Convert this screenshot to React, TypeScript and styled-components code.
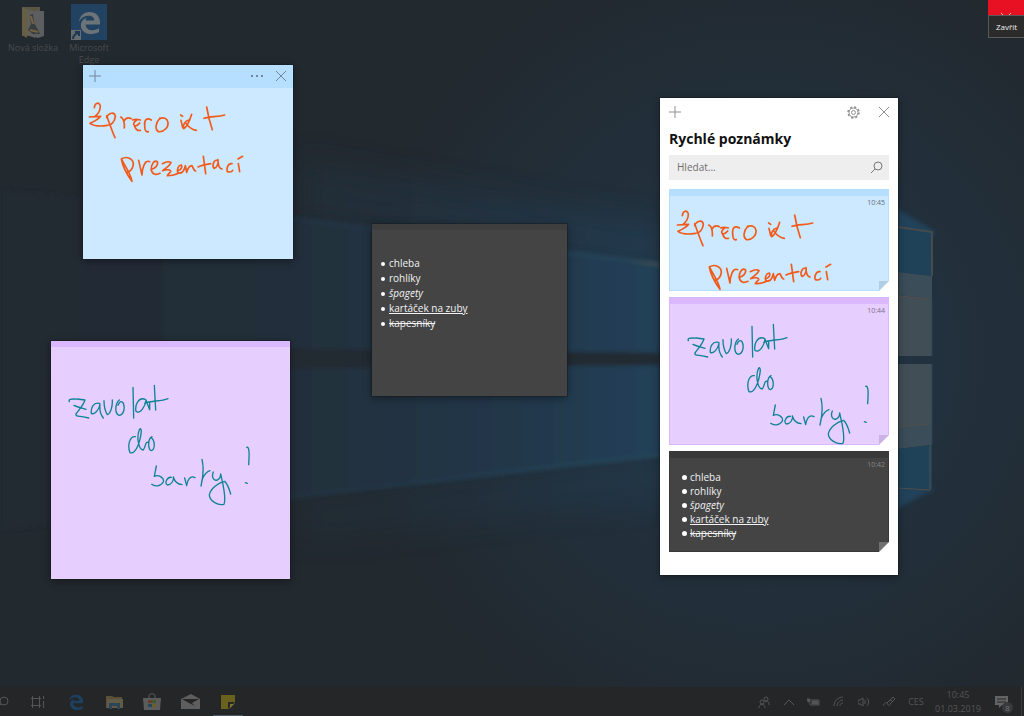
import React from 'react';
import styled, { createGlobalStyle } from 'styled-components';

const GlobalStyle = createGlobalStyle`
  * {
    box-sizing: border-box;
  }

  body {
    margin: 0;
    background: #222930;
    font-family: 'Open Sans', 'Noto Sans', sans-serif;
  }

  button {
    border: 0;
    padding: 0;
    background: none;
    color: inherit;
    font: inherit;
    cursor: pointer;
  }

  svg {
    display: block;
  }
`;

const Wallpaper = () => (
  <WallpaperSvg viewBox="0 0 1024 716" preserveAspectRatio="none" aria-hidden="true">
    <defs>
      <radialGradient id="glow" gradientUnits="userSpaceOnUse" cx="760" cy="355" r="410">
        <stop offset="0" stopColor="#20374a" />
        <stop offset="0.5" stopColor="#22303c" />
        <stop offset="1" stopColor="#22292f" />
      </radialGradient>
      <linearGradient id="beam" gradientUnits="userSpaceOnUse" x1="0" y1="0" x2="660" y2="0">
        <stop offset="0" stopColor="#222a31" />
        <stop offset="0.45" stopColor="#212f3b" />
        <stop offset="0.8" stopColor="#21384b" />
        <stop offset="1" stopColor="#204058" />
      </linearGradient>
      <linearGradient id="edge" gradientUnits="userSpaceOnUse" x1="250" y1="0" x2="660" y2="0">
        <stop offset="0" stopColor="#21405a" stopOpacity="0.2" />
        <stop offset="1" stopColor="#26495c" />
      </linearGradient>
      <filter id="soft" x="-10%" y="-10%" width="120%" height="120%">
        <feGaussianBlur stdDeviation="2" />
      </filter>
      <filter id="haze" x="-30%" y="-30%" width="160%" height="160%">
        <feGaussianBlur stdDeviation="14" />
      </filter>
    </defs>
    <rect width="1024" height="716" fill="#222930" />
    <rect width="1024" height="716" fill="url(#glow)" />
    <path d="M300 160L660 225V270L300 222Z" fill="url(#beam)" opacity="0.6" filter="url(#haze)" />
    <path d="M300 500L660 455V500L300 540Z" fill="url(#beam)" opacity="0.4" filter="url(#haze)" />
    <g filter="url(#soft)">
      <path d="M0 190L290 217L660 264V353L0 346Z" fill="url(#beam)" />
      <path d="M0 370L660 365V455L293 498L0 530Z" fill="url(#beam)" />
      <path d="M0 346L660 353V365L0 370Z" fill="#222931" />
      <path d="M250 213L660 264M250 502L660 455" stroke="url(#edge)" strokeWidth="3" fill="none" />
    </g>
    <path d="M624 260L660 263V267Z" fill="#414b4e" filter="url(#soft)" />
    <path d="M890 205L936 232L928 240L890 232ZM890 485L936 488L890 512Z" fill="#215070" opacity="0.6" filter="url(#soft)" />
    <path d="M898 227L932 232V276L898 272Z" fill="#1f4259" />
    <path d="M898 272L932 276V299L898 295Z" fill="#3a4d58" />
    <path d="M898 295L932 299V356H898Z" fill="#424e55" />
    <path d="M898 364H932V424L898 427Z" fill="#424e55" />
    <path d="M898 427L932 424V445L898 449Z" fill="#3a4d58" />
    <path d="M898 449L932 445V489L898 487Z" fill="#1f4259" />
    <path d="M898 227L932 232V276" stroke="#464b4d" strokeWidth="2" fill="none" />
    <path d="M898 296L930 299M898 427L930 424M930 445V490L898 488" stroke="#51504d" strokeWidth="1" fill="none" />
    <path d="M932 300V356M932 364V445" stroke="#28475a" strokeWidth="1" />
  </WallpaperSvg>
);

const OrangeInk = () => (
  <svg width="174" height="88" viewBox="18 0 522 264" role="img" aria-label="Zpracovat prezentací">
    <InkStroke
      $color="#f15a1a"
      $width={5}
      d="M43 38C45 22 59 20 61 34C61 48 54 58 44 65M28 66L62 64C54 74 42 80 30 85C44 95 64 94 82 91
      M80 62C88 84 96 108 105 128M80 68C86 52 104 50 106 64C104 80 94 90 86 90
      M122 66C131 70 134 82 133 99M131 80C136 70 144 66 154 71
      M158 75C166 71 172 73 181 75M170 75C160 82 158 90 166 93C172 92 176 88 179 84M164 94C168 104 174 108 181 106
      M214 75C200 66 192 76 194 92C194 106 198 112 205 110
      M240 69C226 84 224 104 236 110C252 112 266 96 264 82C262 70 250 65 238 72
      M303 76L308 98M302 60L308 64
      M335 58C330 74 322 96 311 101C308 90 314 78 327 75M316 82C326 98 336 104 349 106
      M380 36C384 60 390 84 397 104M372 70C390 64 412 66 434 60
      M124 192C128 214 142 240 156 259C154 240 136 214 124 192C140 182 160 190 160 208C158 222 148 230 142 232
      M176 196L186 240C186 222 194 192 209 200
      M213 223C224 222 236 210 232 200C222 194 212 210 214 226C218 240 230 240 240 235
      M247 206C258 200 268 199 273 203C268 213 256 221 248 227C260 223 273 223 272 230C268 235 262 239 262 242C276 242 286 240 296 234
      M292 228C302 226 308 216 304 210C296 210 289 222 294 234C304 236 312 232 316 212L320 232C324 218 330 212 336 212C340 218 340 226 347 228
      M370 184L377 236M354 216C366 210 378 208 392 206
      M412 196C400 194 396 214 402 220C412 218 416 204 414 194C414 208 418 220 426 222
      M456 206C444 204 438 222 442 230C450 232 456 230 458 226
      M475 206L479 230M474 192L488 184"
    />
  </svg>
);

const TealInk = () => (
  <svg width="184" height="122" viewBox="54 132 552 366" role="img" aria-label="zavolat do banky!">
    <InkStroke
      $color="#0e8296"
      $width={4}
      d="M58 185C54 174 70 178 82 177L105 180C100 196 88 208 78 222C76 232 92 226 116 234M72 196C84 202 96 204 108 208
      M148 190C130 186 122 204 124 220C134 226 148 208 150 192C148 208 152 224 160 234
      M162 182C162 200 166 214 172 224C182 220 188 200 187 180
      M208 180C194 192 194 222 208 226C222 224 226 202 219 188C212 180 206 190 204 196
      M249 142L251 234
      M286 178C266 170 254 194 258 214C270 224 286 200 288 180L299 209V186
      M313 136L317 210M284 190C306 180 330 186 354 176
      M256 290C238 288 232 318 240 338C256 344 270 310 274 274C272 254 262 276 264 300C266 316 272 330 280 330C288 318 286 302 296 308
      M306 290C292 298 294 328 304 332C316 328 316 300 302 292
      M319 378L313 409C326 403 344 414 340 426C332 440 314 440 305 433
      M364 412C352 410 342 430 352 435C366 434 372 420 370 411C374 424 384 433 396 434
      M404 414L410 437C412 422 420 404 435 413
      M456 358C462 384 460 410 453 438M456 420C462 404 470 395 480 392
      M490 396C484 410 490 424 502 420C510 416 512 408 512 402C518 430 530 472 522 493C504 498 478 482 478 464C482 446 504 428 524 424C532 432 538 448 542 462
      M590 322C599 318 598 346 596 374M586 428L592 430"
    />
  </svg>
);

const PlusIcon = () => (
  <svg width="12" height="12" viewBox="0 0 12 12" stroke="currentColor" fill="none">
    <path d="M6 0V12M0 6H12" />
  </svg>
);

const CloseIcon = () => (
  <svg width="10" height="10" viewBox="0 0 10 10" stroke="currentColor" fill="none">
    <path d="M0 0L10 10M10 0L0 10" />
  </svg>
);

const GearIcon = () => (
  <svg width="13" height="13" viewBox="0 0 26 26" stroke="currentColor" fill="none">
    <circle cx="13" cy="13" r="9" strokeWidth="2" />
    <circle cx="13" cy="13" r="11" strokeWidth="3" strokeDasharray="4.32 4.32" />
    <circle cx="13" cy="13" r="4" strokeWidth="2" />
  </svg>
);

const ShoppingList = ({ roomy }: { roomy?: boolean }) => (
  <Items $roomy={roomy}>
    <li>chleba</li>
    <li>rohlíky</li>
    <li><em>špagety</em></li>
    <li><u>kartáček na zuby</u></li>
    <li><s>kapesníky</s></li>
  </Items>
);

const EdgeLogo = ({ size }: { size: number }) => (
  <svg width={size} height={size} viewBox="0 0 24 24" fill="currentColor" aria-hidden="true">
    <path d="M1 11C2 5 6 1 12 1C19 1 23 6 23 12V14H8C8 18 11 20 15 20C18 20 20 19 22 18V22C20 23 17 24 14 24C7 24 3 20 3 15C3 11 6 8 9 7C8 8 8 9 8 10H17C17 7 15 5 11 5C7 5 3 7 1 11Z" />
  </svg>
);

const DesktopIcons = () => (
  <Shortcuts>
    <Shortcut href="#slozka">
      <svg width="36" height="36" viewBox="0 0 36 36" aria-hidden="true">
        <path d="M7 3H25V32H7Z" fill="#5a5645" />
        <path d="M12 5L20 8V34L12 31Z" fill="#625f59" />
        <path d="M20 7H29V32L23 34L16 32V10Z" fill="#5c5e5f" />
        <path d="M15 11L18 10L19 19L22 24L25 30L18 30L13 26L16 20Z" fill="#363c3f" />
        <path d="M16 12L18 20M15 26L23 28" stroke="#75633f" strokeWidth="2" />
        <path d="M7 3L12 6V34L7 31Z" fill="#665f46" />
      </svg>
      Nová složka
    </Shortcut>
    <Shortcut href="#edge">
      <Tile>
        <EdgeLogo size={23} />
        <ShortcutArrow viewBox="0 0 10 10" aria-hidden="true">
          <path d="M0 0H10V10H0Z" fill="#666c70" />
          <path d="M2 9C2 6 4 4 7 3M4 2H8V6" stroke="#1d3a54" strokeWidth="2" fill="none" />
        </ShortcutArrow>
      </Tile>
      Microsoft Edge
    </Shortcut>
  </Shortcuts>
);

const NotesList = () => (
  <ListWindow>
    <ListBar>
      <button type="button" aria-label="Nová poznámka"><PlusIcon /></button>
      <BarGroup>
        <button type="button" aria-label="Nastavení"><GearIcon /></button>
        <button type="button" aria-label="Zavřít seznam"><CloseIcon /></button>
      </BarGroup>
    </ListBar>
    <Title>Rychlé poznámky</Title>
    <SearchBox>
      <input type="search" placeholder="Hledat..." aria-label="Hledat" />
      <button type="button" aria-label="Vyhledat">
        <svg width="12" height="12" viewBox="0 0 12 12" stroke="currentColor" fill="none">
          <circle cx="7" cy="5" r="4" />
          <path d="M4 8L0 12" />
        </svg>
      </button>
    </SearchBox>
    <Cards>
      <Card $kind="blue">
        <time>10:45</time>
        <CardBody $kind="blue"><OrangeInk /></CardBody>
      </Card>
      <Card $kind="purple">
        <time>10:44</time>
        <CardBody $kind="purple"><TealInk /></CardBody>
      </Card>
      <Card $kind="dark">
        <time>10:42</time>
        <CardBody $kind="dark"><ShoppingList /></CardBody>
      </Card>
    </Cards>
  </ListWindow>
);

const Taskbar = () => (
  <Bar>
    <SearchButton type="button" aria-label="Hledání">
      <svg width="10" height="12" viewBox="3 0 10 12" stroke="currentColor" fill="none">
        <circle cx="7" cy="5" r="4" />
        <path d="M4 8L1 11" />
      </svg>
    </SearchButton>
    <TaskButton type="button" aria-label="Zobrazení úkolů">
      <svg width="14" height="12" viewBox="0 0 14 12" stroke="currentColor" fill="none">
        <path d="M1.5 0V12M8.5 0V12M0 2.5H10M0 9.5H10M12.5 0V3M12.5 5V12" />
      </svg>
    </TaskButton>
    <TaskButton type="button" aria-label="Microsoft Edge" $color="#1d4060">
      <EdgeLogo size={16} />
    </TaskButton>
    <TaskButton type="button" aria-label="Průzkumník souborů">
      <svg width="17" height="14" viewBox="0 0 17 14">
        <path d="M0 1H6L8 2H16V13H0Z" fill="#5a5039" />
        <path d="M1 4H17V13H1Z" fill="#625b48" />
        <path d="M3 14V8H14V14H11V11H6V14Z" fill="#2b4656" />
      </svg>
    </TaskButton>
    <TaskButton type="button" aria-label="Microsoft Store">
      <svg width="18" height="17" viewBox="0 0 18 17">
        <path d="M6 5V3C6 0 12 0 12 3V5" fill="none" stroke="#5c5c5c" strokeWidth="1" />
        <path d="M0 5H18L17 17H1Z" fill="#5c5c5c" />
        <path d="M5 7H9V10H5Z" fill="#6b3a29" />
        <path d="M9 7H13V10H9Z" fill="#40582c" />
        <path d="M5 11H9V14H5Z" fill="#23495f" />
        <path d="M9 11H13V14H9Z" fill="#6f5e26" />
      </svg>
    </TaskButton>
    <TaskButton type="button" aria-label="Pošta">
      <svg width="19" height="15" viewBox="0 0 19 15">
        <path d="M0 5L10 0L19 5V15H0Z" fill="#5e5e5e" />
        <path d="M1 5L18 5L11 9L14 12L8 9Z" fill="#262626" />
      </svg>
    </TaskButton>
    <TaskButton type="button" aria-label="Rychlé poznámky" $active>
      <svg width="14" height="14" viewBox="0 0 14 14">
        <path d="M0 0H14V8L8 14H0Z" fill="#68621d" />
        <path d="M7 14V7H14Z" fill="#262626" />
        <path d="M9 13V9H13Z" fill="#78743a" />
      </svg>
    </TaskButton>
    <Tray>
      <TrayButton type="button" aria-label="Lidé">
        <svg width="12" height="12" viewBox="0 0 12 12" stroke="currentColor" fill="none">
          <circle cx="8" cy="3" r="2" />
          <circle cx="4" cy="6" r="2" />
          <path d="M1 12C1 7 7 7 7 12M7 6C10 4 11 6 11 9" />
        </svg>
      </TrayButton>
      <TrayButton type="button" aria-label="Skryté ikony">
        <svg width="10" height="6" viewBox="0 0 10 6" stroke="currentColor" fill="none">
          <path d="M0 6L5 1L10 6" />
        </svg>
      </TrayButton>
      <TrayButton type="button" aria-label="Baterie">
        <svg width="13" height="8" viewBox="0 0 13 8" stroke="currentColor" fill="none">
          <path d="M4 2H12V7H3V5" />
          <path d="M5 3H11V6H5ZM0 1H3V4H1Z" fill="currentColor" />
        </svg>
      </TrayButton>
      <TrayButton type="button" aria-label="Síť">
        <svg width="11" height="11" viewBox="0 0 11 11" stroke="currentColor" fill="none">
          <path d="M1 10C1 5 5 1 10 1M4 10C4 7 7 4 10 4M7 10C7 8 8 7 10 7" />
        </svg>
      </TrayButton>
      <TrayButton type="button" aria-label="Hlasitost">
        <svg width="11" height="10" viewBox="0 0 11 10" stroke="currentColor" fill="none">
          <path d="M0 3H2L5 1V9L2 7H0ZM7 3V7M9 1C11 3 11 7 9 9" />
        </svg>
      </TrayButton>
      <TrayButton type="button" aria-label="Pero">
        <svg width="12" height="11" viewBox="0 0 12 11" stroke="currentColor" fill="none">
          <path d="M0 10C2 6 3 6 4 7C5 9 6 11 7 8M4 7L10 1L12 3L7 8M7 4L9 5" />
        </svg>
      </TrayButton>
      <TrayButton type="button" $wide>CES</TrayButton>
      <Clock type="button">
        <span>10:45</span>
        <span>01.03.2019</span>
      </Clock>
      <ActionCenter type="button" aria-label="Centrum akcí">
        <svg width="13" height="12" viewBox="0 0 13 12">
          <path d="M0 0H13V9H7L4 12V9H0Z" fill="#646464" />
          <path d="M2 3H11M2 6H11" stroke="#262626" />
        </svg>
        <Badge>8</Badge>
      </ActionCenter>
    </Tray>
  </Bar>
);

export default function App() {
  return (
    <>
      <GlobalStyle />
      <Screen>
        <Desktop>
          <Wallpaper />
          <DesktopIcons />
          <BlueNote>
            <NoteBar>
              <button type="button" aria-label="Přidat poznámku"><PlusIcon /></button>
              <BarGroup>
                <button type="button" aria-label="Nabídka">
                  <svg width="12" height="2" viewBox="0 0 12 2" fill="currentColor">
                    <path d="M0 0H2V2H0ZM5 0H7V2H5ZM10 0H12V2H10Z" />
                  </svg>
                </button>
                <button type="button" aria-label="Zavřít poznámku"><CloseIcon /></button>
              </BarGroup>
            </NoteBar>
            <OrangeInk />
          </BlueNote>
          <PurpleNote>
            <TealInk />
          </PurpleNote>
          <DarkNote>
            <ShoppingList roomy />
          </DarkNote>
          <NotesList />
          <Corner>
            <CornerClose type="button" aria-label="Zavřít">
              <svg width="10" height="10" viewBox="0 0 10 10" stroke="#f6c9a0" fill="none">
                <path d="M0 0L10 10M10 0L0 10" />
              </svg>
            </CornerClose>
            <Tooltip role="tooltip">Zavřít</Tooltip>
          </Corner>
        </Desktop>
        <Taskbar />
      </Screen>
    </>
  );
}

const kinds = {
  blue: { stripe: '#b5deff', body: '#cde9ff', fold: '#afcde3', time: '#5f6f7c', pad: '8px 5px 0' },
  purple: { stripe: '#d9b8ff', body: '#e6cfff', fold: '#cab2e4', time: '#7c6f8a', pad: '20px 18px 0' },
  dark: { stripe: '#393939', body: '#444444', fold: '#707070', time: '#858585', pad: '13px 13px 12px' },
};

type Kind = keyof typeof kinds;

const Screen = styled.div`
  display: flex;
  flex-direction: column;
  min-height: 100vh;
`;

const Desktop = styled.main`
  position: relative;
  flex: 1;
  overflow: hidden;
`;

const WallpaperSvg = styled.svg`
  position: absolute;
  top: 0;
  left: 0;
  width: 100%;
  height: 100vh;
`;

const InkStroke = styled.path<{ $color: string; $width: number }>`
  fill: none;
  stroke: ${props => props.$color};
  stroke-width: ${props => props.$width};
  stroke-linecap: round;
  stroke-linejoin: round;
`;

const Shortcuts = styled.nav`
  position: relative;
  display: flex;
  gap: 2px;
  padding: 4px 6px;
`;

const Shortcut = styled.a`
  display: flex;
  flex-direction: column;
  align-items: center;
  gap: 2px;
  width: 54px;
  color: #484b4e;
  font-size: 9px;
  line-height: 12px;
  text-align: center;
  text-decoration: none;
`;

const Tile = styled.span`
  position: relative;
  display: flex;
  align-items: center;
  justify-content: center;
  width: 36px;
  height: 36px;
  background: #214260;
  color: #6c7478;
`;

const ShortcutArrow = styled.svg`
  position: absolute;
  left: 0;
  bottom: 0;
  width: 10px;
  height: 10px;
`;

const Note = styled.section`
  position: absolute;
  box-shadow: 0 0 0 1px rgba(20, 24, 30, 0.4), 0 2px 8px rgba(0, 0, 0, 0.4);
`;

const BlueNote = styled(Note)`
  left: 83px;
  top: 65px;
  width: 210px;
  height: 194px;
  background: ${kinds.blue.body};

  > svg {
    margin: 7px 3px;
  }
`;

const PurpleNote = styled(Note)`
  left: 51px;
  top: 341px;
  width: 239px;
  height: 238px;
  padding: 37px 17px;
  border-top: 6px solid ${kinds.purple.stripe};
  background: ${kinds.purple.body};
`;

const DarkNote = styled(Note)`
  left: 372px;
  top: 224px;
  width: 195px;
  height: 172px;
  padding: 26px 9px;
  border-top: 6px solid #3e3e3e;
  background: ${kinds.dark.body};
`;

const NoteBar = styled.header`
  display: flex;
  align-items: center;
  justify-content: space-between;
  height: 23px;
  padding: 0 7px 1px 6px;
  background: ${kinds.blue.stripe};
  color: #6e889d;
`;

const BarGroup = styled.div`
  display: flex;
  align-items: center;
  gap: 13px;
`;

const ListWindow = styled(Note)`
  left: 660px;
  top: 98px;
  width: 238px;
  padding: 7px 9px 23px;
  background: #ffffff;
`;

const ListBar = styled.header`
  display: flex;
  align-items: center;
  justify-content: space-between;
  height: 14px;
  color: #8f8f8f;

  ${BarGroup} {
    gap: 19px;
  }
`;

const Title = styled.h1`
  margin: 10px 0 6px;
  color: #111111;
  font-size: 14px;
  font-weight: 700;
  line-height: 20px;
`;

const SearchBox = styled.div`
  display: flex;
  align-items: center;
  height: 25px;
  padding: 0 6px 1px 8px;
  background: #eeeeee;
  color: #777777;

  input {
    flex: 1;
    min-width: 0;
    padding: 0;
    border: 0;
    outline: 0;
    background: none;
    font: 10px 'Open Sans', 'Noto Sans', sans-serif;
  }

  input::placeholder {
    color: #6f6f6f;
  }
`;

const Cards = styled.div`
  display: flex;
  flex-direction: column;
  gap: 6px;
  margin-top: 9px;
`;

const Card = styled.article<{ $kind: Kind }>`
  position: relative;
  border-top: 6px solid ${props => kinds[props.$kind].stripe};
  background: ${props => kinds[props.$kind].body};
  box-shadow: inset 0 0 0 1px ${props => kinds[props.$kind].stripe};

  time {
    position: absolute;
    top: 2px;
    right: 4px;
    color: ${props => kinds[props.$kind].time};
    font-size: 7px;
    line-height: 12px;
  }

  &::before,
  &::after {
    content: '';
    position: absolute;
    right: 0;
    bottom: 0;
    width: 10px;
    height: 10px;
    background: ${props => kinds[props.$kind].fold};
  }

  &::after {
    background: #ffffff;
    clip-path: polygon(100% 0, 100% 100%, 0 100%);
  }
`;

const CardBody = styled.div<{ $kind: Kind }>`
  padding: ${props => kinds[props.$kind].pad};
`;

const Items = styled.ul<{ $roomy?: boolean }>`
  margin: 0;
  padding: 0;
  list-style: none;
  color: #f2f2f2;
  font-size: 10px;
  line-height: ${props => (props.$roomy ? '15px' : '14px')};

  li {
    display: flex;
    align-items: center;
    gap: ${props => (props.$roomy ? '4px' : '3px')};
  }

  li::before {
    content: '';
    width: ${props => (props.$roomy ? '4px' : '5px')};
    height: ${props => (props.$roomy ? '4px' : '5px')};
    border-radius: 50%;
    background: #ffffff;
  }
`;

const Corner = styled.div`
  position: absolute;
  top: 0;
  right: 0;
  width: 36px;
`;

const CornerClose = styled.button`
  display: flex;
  align-items: flex-end;
  justify-content: center;
  width: 100%;
  height: 15px;
  overflow: hidden;
  background: #e81123;

  svg {
    flex: none;
    margin-bottom: -8px;
  }
`;

const Tooltip = styled.div`
  border: 1px solid #5a5a5a;
  border-right: 0;
  background: #2b2b2b;
  color: #f0f0f0;
  font-size: 8px;
  line-height: 21px;
  text-align: center;
`;

const Bar = styled.footer`
  position: relative;
  display: flex;
  height: 29px;
  background: #252628;
  color: #555555;
`;

const SearchButton = styled.button`
  display: flex;
  align-items: center;
  width: 19px;
`;

const TaskButton = styled.button<{ $active?: boolean; $color?: string }>`
  display: flex;
  align-items: center;
  justify-content: center;
  width: 30px;
  margin: 0 4px;
  border-top: 1px solid transparent;
  border-bottom: 1px solid ${props => (props.$active ? '#4b5a64' : 'transparent')};
  color: ${props => props.$color || '#555555'};
`;

const Tray = styled.div`
  display: flex;
  align-items: center;
  margin-left: auto;
  padding-right: 4px;
  border-right: 1px solid #3a3b3d;
  margin-right: 2px;
  font-size: 9px;
`;

const TrayButton = styled.button<{ $wide?: boolean }>`
  display: flex;
  align-items: center;
  justify-content: center;
  width: ${props => (props.$wide ? '30px' : '25px')};
  height: 100%;
`;

const Clock = styled.button`
  display: flex;
  flex-direction: column;
  align-items: center;
  width: 54px;
  line-height: 14px;
`;

const ActionCenter = styled.button`
  position: relative;
  display: flex;
  align-items: center;
  justify-content: center;
  width: 32px;
  height: 100%;
`;

const Badge = styled.span`
  position: absolute;
  right: 4px;
  bottom: 3px;
  width: 11px;
  height: 11px;
  border-radius: 50%;
  background: #38393a;
  color: #777777;
  font-size: 8px;
  line-height: 11px;
`;
